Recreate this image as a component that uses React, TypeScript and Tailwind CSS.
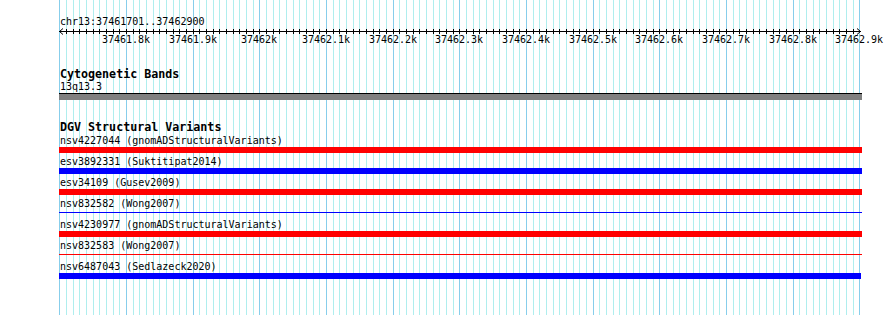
const START = 37461701;
const X0 = 60;

// page x for a base pair position
const bpX = (bp: number) => X0 + ((bp - START) * 2) / 3;

const gridLines = Array.from({ length: 121 }, (_, k) => ({
  x: Math.round(bpX(37461700 + k * 10)),
  major: k % 10 === 0,
}));

const labels = [
  "37461.8k",
  "37461.9k",
  "37462k",
  "37462.1k",
  "37462.2k",
  "37462.3k",
  "37462.4k",
  "37462.5k",
  "37462.6k",
  "37462.7k",
  "37462.8k",
  "37462.9k",
].map((text, i) => ({ text, x: Math.round(bpX(37461800 + i * 100)) }));

const variants = [
  { name: "nsv4227044 (gnomADStructuralVariants)", color: "red", thin: false, w: "w-[803px]" },
  { name: "esv3892331 (Suktitipat2014)", color: "blue", thin: false, w: "w-[803px]" },
  { name: "esv34109 (Gusev2009)", color: "red", thin: false, w: "w-[803px]" },
  { name: "nsv832582 (Wong2007)", color: "blue", thin: true, w: "w-[803px]" },
  { name: "nsv4230977 (gnomADStructuralVariants)", color: "red", thin: false, w: "w-[803px]" },
  { name: "nsv832583 (Wong2007)", color: "red", thin: true, w: "w-[803px]" },
  { name: "nsv6487043 (Sedlazeck2020)", color: "blue", thin: false, w: "w-[802px]" },
];

function Grid() {
  return (
    <svg className="absolute inset-0" width={890} height={315}>
      {gridLines.map((l) => (
        <line
          key={l.x}
          x1={l.x + 0.5}
          x2={l.x + 0.5}
          y1={0}
          y2={315}
          stroke={l.major ? "#87ceeb" : "#afeeee"}
          strokeWidth={1}
        />
      ))}
    </svg>
  );
}

function Ruler() {
  return (
    <div className="relative h-[18px] w-[890px]">
      <svg className="absolute inset-0" width={890} height={18}>
        <line x1={59} x2={861} y1={3.5} y2={3.5} stroke="#000" />
        <path d="M59.5 3.5 L63 0.5 M59.5 3.5 L63 6.5" stroke="#000" fill="none" />
        <path d="M860.5 3.5 L857 0.5 M860.5 3.5 L857 6.5" stroke="#000" fill="none" />
        {gridLines.slice(1, 120).map((l) => (
          <line key={l.x} x1={l.x + 0.5} x2={l.x + 0.5} y1={1} y2={6} stroke="#000" />
        ))}
      </svg>
      {labels.map((l) => (
        <span
          key={l.text}
          className="absolute top-[6px] w-[60px] text-center text-[10px] leading-[12px]"
          style={{ left: l.x - 30 }}
        >
          {l.text}
        </span>
      ))}
    </div>
  );
}

export default function App() {
  return (
    <div className="relative h-[315px] w-[890px] overflow-hidden bg-white font-['DejaVu_Sans_Mono','Liberation_Mono',monospace] text-black">
      <Grid />
      <div className="relative flex flex-col">
        <div className="ml-[60px] pt-[16px] text-[10px] leading-[12px]">chr13:37461701..37462900</div>
        <Ruler />

        <div className="ml-[60px] mt-[22px] text-[11.67px] font-bold leading-[13px]">Cytogenetic Bands</div>
        <div className="ml-[60px] text-[10px] leading-[12px]">13q13.3</div>
        <div className="ml-[59px] h-[7px] w-[803px] border-t border-black bg-[#808080]" />

        <div className="ml-[60px] mt-[21px] text-[11.67px] font-bold leading-[13px]">DGV Structural Variants</div>
        <div className="mt-[1px] flex flex-col">
          {variants.map((v) => (
            <div key={v.name} className="flex h-[21px] flex-col">
              <div className="ml-[60px] text-[10px] leading-[12px]">{v.name}</div>
              <div className={`ml-[59px] h-[6px] ${v.w}`}>
                {v.thin ? (
                  <div className={`mt-[2px] h-px w-full ${v.color === "red" ? "bg-[#ff0000]" : "bg-[#0000ff]"}`} />
                ) : (
                  <div className={`h-full w-full ${v.color === "red" ? "bg-[#ff0000]" : "bg-[#0000ff]"}`} />
                )}
              </div>
            </div>
          ))}
        </div>
      </div>
    </div>
  );
}
